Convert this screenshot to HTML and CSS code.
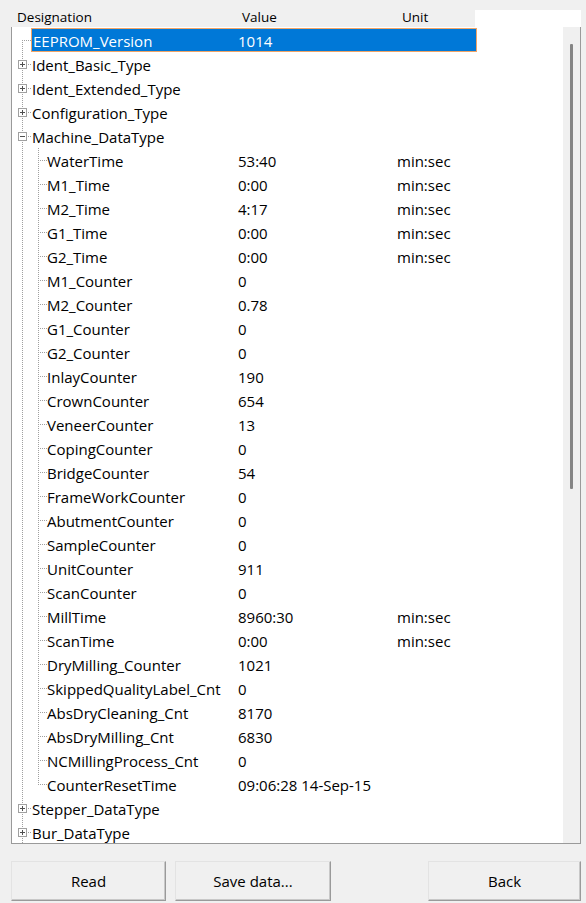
FILE: index.html
```html
<!DOCTYPE html>
<html>
<head>
<meta charset="utf-8">
<link rel="stylesheet" href="styles.css">
</head>
<body>
<div class="win">
  <div class="hdr">
    <div class="h-name">Designation</div>
    <div class="h-val">Value</div>
    <div class="h-unit">Unit</div>
    <div class="h-blank"></div>
  </div>
  <div class="box">
    <div class="rows">
      <div class="row r-first">
        <span class="gut gut-sel"></span>
        <div class="sel"><span class="sname">EEPROM_Version</span><span class="val">1014</span></div>
      </div>
      <div class="row r-top"><span class="gut"><svg class="exp" width="9" height="9" viewBox="0 0 9 9"><rect x="0.5" y="0.5" width="8" height="8" fill="#fff" stroke="#a0a0a0"/><path d="M2 4.5H7M4.5 2V7" stroke="#505050"/></svg></span><span class="name">Ident_Basic_Type</span></div>
      <div class="row r-top"><span class="gut"><svg class="exp" width="9" height="9" viewBox="0 0 9 9"><rect x="0.5" y="0.5" width="8" height="8" fill="#fff" stroke="#a0a0a0"/><path d="M2 4.5H7M4.5 2V7" stroke="#505050"/></svg></span><span class="name">Ident_Extended_Type</span></div>
      <div class="row r-top"><span class="gut"><svg class="exp" width="9" height="9" viewBox="0 0 9 9"><rect x="0.5" y="0.5" width="8" height="8" fill="#fff" stroke="#a0a0a0"/><path d="M2 4.5H7M4.5 2V7" stroke="#505050"/></svg></span><span class="name">Configuration_Type</span></div>
      <div class="row r-top"><span class="gut"><svg class="exp" width="9" height="9" viewBox="0 0 9 9"><rect x="0.5" y="0.5" width="8" height="8" fill="#fff" stroke="#a0a0a0"/><path d="M2 4.5H7" stroke="#505050"/></svg></span><span class="name">Machine_DataType</span></div>

      <div class="row r-child"><span class="gut gut-c"></span><span class="name nc">WaterTime</span><span class="val">53:40</span><span class="unit">min:sec</span></div>
      <div class="row r-child"><span class="gut gut-c"></span><span class="name nc">M1_Time</span><span class="val">0:00</span><span class="unit">min:sec</span></div>
      <div class="row r-child"><span class="gut gut-c"></span><span class="name nc">M2_Time</span><span class="val">4:17</span><span class="unit">min:sec</span></div>
      <div class="row r-child"><span class="gut gut-c"></span><span class="name nc">G1_Time</span><span class="val">0:00</span><span class="unit">min:sec</span></div>
      <div class="row r-child"><span class="gut gut-c"></span><span class="name nc">G2_Time</span><span class="val">0:00</span><span class="unit">min:sec</span></div>
      <div class="row r-child"><span class="gut gut-c"></span><span class="name nc">M1_Counter</span><span class="val">0</span></div>
      <div class="row r-child"><span class="gut gut-c"></span><span class="name nc">M2_Counter</span><span class="val">0.78</span></div>
      <div class="row r-child"><span class="gut gut-c"></span><span class="name nc">G1_Counter</span><span class="val">0</span></div>
      <div class="row r-child"><span class="gut gut-c"></span><span class="name nc">G2_Counter</span><span class="val">0</span></div>
      <div class="row r-child"><span class="gut gut-c"></span><span class="name nc">InlayCounter</span><span class="val">190</span></div>
      <div class="row r-child"><span class="gut gut-c"></span><span class="name nc">CrownCounter</span><span class="val">654</span></div>
      <div class="row r-child"><span class="gut gut-c"></span><span class="name nc">VeneerCounter</span><span class="val">13</span></div>
      <div class="row r-child"><span class="gut gut-c"></span><span class="name nc">CopingCounter</span><span class="val">0</span></div>
      <div class="row r-child"><span class="gut gut-c"></span><span class="name nc">BridgeCounter</span><span class="val">54</span></div>
      <div class="row r-child"><span class="gut gut-c"></span><span class="name nc">FrameWorkCounter</span><span class="val">0</span></div>
      <div class="row r-child"><span class="gut gut-c"></span><span class="name nc">AbutmentCounter</span><span class="val">0</span></div>
      <div class="row r-child"><span class="gut gut-c"></span><span class="name nc">SampleCounter</span><span class="val">0</span></div>
      <div class="row r-child"><span class="gut gut-c"></span><span class="name nc">UnitCounter</span><span class="val">911</span></div>
      <div class="row r-child"><span class="gut gut-c"></span><span class="name nc">ScanCounter</span><span class="val">0</span></div>
      <div class="row r-child"><span class="gut gut-c"></span><span class="name nc">MillTime</span><span class="val">8960:30</span><span class="unit">min:sec</span></div>
      <div class="row r-child"><span class="gut gut-c"></span><span class="name nc">ScanTime</span><span class="val">0:00</span><span class="unit">min:sec</span></div>
      <div class="row r-child"><span class="gut gut-c"></span><span class="name nc">DryMilling_Counter</span><span class="val">1021</span></div>
      <div class="row r-child"><span class="gut gut-c"></span><span class="name nc">SkippedQualityLabel_Cnt</span><span class="val">0</span></div>
      <div class="row r-child"><span class="gut gut-c"></span><span class="name nc">AbsDryCleaning_Cnt</span><span class="val">8170</span></div>
      <div class="row r-child"><span class="gut gut-c"></span><span class="name nc">AbsDryMilling_Cnt</span><span class="val">6830</span></div>
      <div class="row r-child"><span class="gut gut-c"></span><span class="name nc">NCMillingProcess_Cnt</span><span class="val">0</span></div>
      <div class="row r-lastchild"><span class="gut gut-c"></span><span class="name nc">CounterResetTime</span><span class="val wide">09:06:28 14-Sep-15</span></div>

      <div class="row r-top"><span class="gut"><svg class="exp" width="9" height="9" viewBox="0 0 9 9"><rect x="0.5" y="0.5" width="8" height="8" fill="#fff" stroke="#a0a0a0"/><path d="M2 4.5H7M4.5 2V7" stroke="#505050"/></svg></span><span class="name">Stepper_DataType</span></div>
      <div class="row r-top"><span class="gut"><svg class="exp" width="9" height="9" viewBox="0 0 9 9"><rect x="0.5" y="0.5" width="8" height="8" fill="#fff" stroke="#a0a0a0"/><path d="M2 4.5H7M4.5 2V7" stroke="#505050"/></svg></span><span class="name">Bur_DataType</span></div>
    </div>
    <div class="vscroll"><div class="thumb"></div></div>
  </div>
  <div class="btns">
    <button class="btn b-read">Read</button>
    <button class="btn b-save">Save data...</button>
    <button class="btn b-back">Back</button>
  </div>
</div>
</body>
</html>
```

FILE: styles.css
```css
html, body {
  margin: 0;
  padding: 0;
  background: #f0f0f0;
}
body {
  font-family: "Open Sans", "Noto Sans", sans-serif;
  color: #000;
  width: 586px;
  height: 903px;
  overflow: hidden;
}
.win {
  padding-top: 8px;
}
.hdr {
  display: flex;
  height: 19px;
  padding-left: 17px;
  font-size: 13.5px;
  line-height: 18px;
}
.h-name { width: 225px; flex: none; }
.h-val { width: 160px; flex: none; }
.h-unit { width: 73px; flex: none; }
.h-blank {
  width: 106px;
  flex: none;
  margin-top: 2px;
  height: 17px;
  background: #fff;
}
.box {
  margin-left: 11px;
  width: 570px;
  height: 817px;
  box-sizing: border-box;
  border-left: 1px solid #9a9a9a;
  border-right: 1px solid #9a9a9a;
  border-bottom: 1px solid #9a9a9a;
  background: #fff;
  display: flex;
  overflow: hidden;
}
.rows {
  width: 551px;
  flex: none;
  padding-top: 1px;
  font-size: 15px;
}
.row {
  display: flex;
  align-items: center;
  height: 24px;
  white-space: nowrap;
  background-repeat: no-repeat;
}
.name, .val, .unit, .sname {
  padding-top: 2px;
  line-height: 22px;
}
.gut {
  width: 20px;
  flex: none;
  height: 24px;
  display: flex;
  align-items: center;
}
.gut-sel { width: 19px; }
.gut-c { width: 35px; }
.exp {
  margin-left: 6px;
  display: block;
}
.name { width: 206px; flex: none; }
.name.nc { width: 191px; }
.val { width: 159px; flex: none; }
.val.wide { width: auto; }
.unit { flex: none; }
.sel {
  width: 446px;
  height: 24px;
  box-sizing: border-box;
  border: 1px solid #f0a466;
  background: #0078d7;
  color: #fff;
  display: flex;
  align-items: center;
}
.sel .sname, .sel .val {
  padding-top: 1px;
}
.sname {
  width: 206px;
  flex: none;
  padding-left: 1px;
  box-sizing: border-box;
}

/* tree lines */
.r-first {
  background-image:
    repeating-linear-gradient(to bottom, #a0a0a0 0 1px, transparent 1px 2px),
    repeating-linear-gradient(to right, #a0a0a0 0 1px, transparent 1px 2px);
  background-position: 10px 12px, 10px 12px;
  background-size: 1px 12px, 9px 1px;
}
.r-top {
  background-image:
    repeating-linear-gradient(to bottom, #a0a0a0 0 1px, transparent 1px 2px),
    repeating-linear-gradient(to right, #a0a0a0 0 1px, transparent 1px 2px);
  background-position: 10px 0, 10px 12px;
  background-size: 1px 24px, 9px 1px;
}
.r-child {
  background-image:
    repeating-linear-gradient(to bottom, #a0a0a0 0 1px, transparent 1px 2px),
    repeating-linear-gradient(to bottom, #a0a0a0 0 1px, transparent 1px 2px),
    repeating-linear-gradient(to right, #a0a0a0 0 1px, transparent 1px 2px);
  background-position: 10px 0, 26px 0, 26px 12px;
  background-size: 1px 24px, 1px 24px, 9px 1px;
}
.r-lastchild {
  background-image:
    repeating-linear-gradient(to bottom, #a0a0a0 0 1px, transparent 1px 2px),
    repeating-linear-gradient(to bottom, #a0a0a0 0 1px, transparent 1px 2px),
    repeating-linear-gradient(to right, #a0a0a0 0 1px, transparent 1px 2px);
  background-position: 10px 0, 26px 0, 26px 12px;
  background-size: 1px 24px, 1px 13px, 9px 1px;
}

.vscroll {
  width: 17px;
  flex: none;
  background: #f0f0f0;
}
.thumb {
  margin-top: 17px;
  margin-left: 7px;
  width: 3px;
  height: 445px;
  background: #858585;
  border-radius: 1px;
}

.btns {
  display: flex;
  margin-top: 17px;
  padding-left: 11px;
  padding-right: 5px;
}
.btn {
  height: 40px;
  box-sizing: border-box;
  font-family: "Open Sans", "Noto Sans", sans-serif;
  font-size: 15px;
  color: #000;
  background: #f0f0f0;
  border-top: 1px solid #e3e3e3;
  border-left: 1px solid #e3e3e3;
  border-right: 1px solid #9a9a9a;
  border-bottom: 1px solid #9a9a9a;
  box-shadow: inset -1px -1px 0 #c8c8c8;
  padding: 0;
}
.b-read { width: 155px; }
.b-save { width: 156px; margin-left: 9px; }
.b-back { width: 153px; margin-left: auto; }
```
